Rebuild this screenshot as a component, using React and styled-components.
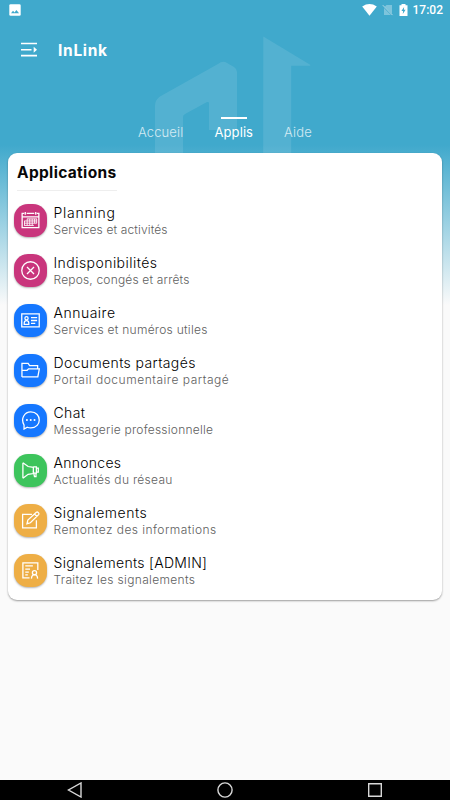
import React from "react";
import styled, { createGlobalStyle } from "styled-components";

const apps = [
	{ title: "Planning", text: "Services et activités", icon: "calendar", color: "#c9357c", ts: 0.75, ss: 0.13 },
	{ title: "Indisponibilités", text: "Repos, congés et arrêts", icon: "cross", color: "#c9357c", ts: 0.45, ss: 0.18 },
	{ title: "Annuaire", text: "Services et numéros utiles", icon: "card", color: "#1577ff", ts: 0.5, ss: 0.26 },
	{ title: "Documents partagés", text: "Portail documentaire partagé", icon: "folder", color: "#1577ff", ts: 0.38, ss: 0.52 },
	{ title: "Chat", text: "Messagerie professionnelle", icon: "chat", color: "#1577ff", ts: 0.4, ss: 0.23 },
	{ title: "Annonces", text: "Actualités du réseau", icon: "horn", color: "#3dc45c", ts: 0.28, ss: 0.3 },
	{ title: "Signalements", text: "Remontez des informations", icon: "edit", color: "#eeae45", ts: 0.5, ss: 0.45 },
	{ title: "Signalements [ADMIN]", text: "Traitez les signalements", icon: "admin", color: "#eeae45", ts: 0.3, ss: 0.33 },
];

const icons = {
	calendar: (
		<>
			<path d="M3.500 2.500H1.200v15h17.600v-15h-2.300M6 2.500h8M1.200 6.200h17.600" />
			<path d="M4.500 1v3M15.500 1v3" />
			<path strokeWidth=".9" d="M6.300 8.300h10.400M3.300 10.500h13.400M3.300 12.800h13.400M3.300 15.200h10.200M3.700 10.500v4.700M6.500 8.300v6.900M9.200 8.300v6.900M11.800 8.300v6.900M14.300 8.300v4.500M16.500 8.300v4.500" />
		</>
	),
	cross: (
		<>
			<circle cx="10" cy="10" r="9.200" />
			<path d="M6.300 6.300l7.400 7.400M13.700 6.300l-7.400 7.400" />
		</>
	),
	card: (
		<>
			<path d="M.8 3h18.400v13.700H.8z" />
			<circle cx="5.800" cy="7.700" r="1.700" />
			<path d="M3.400 14.100v-1.600c0-3.200 4.800-3.200 4.800 0v1.600zM10.500 7H17M10.500 10H17M10.500 13h4.500" />
		</>
	),
	folder: (
		<path d="M1 16.800V2.500h6.500l1.600 2.300h8.400v3.400M1 16.800h16.700l1.600-8.600H8L6.400 9.800H1" />
	),
	chat: (
		<>
			<path d="M3.200 19v-4.300C-.8 7.800 4 1 10.300 1c11.900 0 11.900 16.800 0 16.800-1.400 0-2.600-.2-3.700-.7z" />
			<path strokeWidth="2" strokeLinecap="round" d="M6.200 9.400h.1M10.200 9.400h.1M14.200 9.400h.1" />
		</>
	),
	horn: (
		<>
			<path d="M2 1.800v16.400M2 1.800l5.500 4 5.500.8v6.600l-5.500.8L2 18.200" />
			<path d="M13 6.200h3.200v6.600H13M16.200 7.400h2v4.200h-2M13 11l1.200 5.500h1.600v-3.700" />
		</>
	),
	edit: (
		<>
			<path d="M11.500 3.500H1.700v14.300h14.500V9.800" />
			<path d="M6.300 13.400l.9-3.800 9-8.200c1.300-1 3.400 1.100 2.300 2.400l-8.600 8.600zM14.200 3.200l2.600 2.600" />
		</>
	),
	admin: (
		<>
			<path d="M9 17.800H2V2h15.700v7.500M4.500 5.200h8M4.500 8.500h5M4.500 11.600h3.700M4.500 14.700h2.700" />
			<circle cx="14.200" cy="12.300" r="2.200" />
			<path d="M11 18.600c.4-5.600 6.100-5.600 6.500 0" />
		</>
	),
};

const App = () => {
	return (
		<Phone>
			<GlobalStyle />
			<Logo viewBox="0 0 450 153">
				<path d="M155 153V106q0-6 5-9.500L218 64q5-4 9-1l7 4q3 2 3 5v58h-28v-27q0-1.500-2-1l-22 12q-2 1-2 3v36z" />
				<path d="M263.300 36.500L310.500 65l-.5.700h-18.800V153h-28z" />
			</Logo>
			<StatusBar>
				<Picture viewBox="0 0 12 12">
					<rect x=".3" y=".3" width="11.400" height="11.400" rx="1.300" fill="#fff" />
					<path d="M2 9.300l2-2.500 1.600 1.600L7.300 6l2.800 3.300z" fill="#40a9cc" />
				</Picture>
				<StatusIcons>
					<svg width="15" height="12" viewBox="0 0 15 12">
						<path d="M.2 2.400Q7.500-2.200 14.800 2.400L7.500 11.800z" fill="#fff" />
					</svg>
					<svg width="12" height="12" viewBox="0 0 12 12">
						<path d="M4.500 1H10v8.700L2.800 2.700zM2 4l7 7H2z" fill="#fff" opacity=".32" />
						<path d="M.8 1.200l9.700 9.900" stroke="#b5dae6" strokeWidth="1" />
					</svg>
					<svg width="9" height="12" viewBox="0 0 9 12">
						<path d="M.5 1.300h2V.1h4v1.200h2v10.600h-8z" fill="#fff" />
						<path d="M5.100 2.900L2.400 7h1.700L3.800 10l2.800-4.200H4.900z" fill="#40a9cc" />
					</svg>
					<Clock>17:02</Clock>
				</StatusIcons>
			</StatusBar>
			<AppBar>
				<svg width="17" height="16" viewBox="0 0 17 16" fill="none" stroke="#fff" strokeWidth="1.600">
					<path d="M0 1.500h16M0 7.700h10.500M0 13.600h16" />
					<path d="M12.700 4.700l3.300 3-3.300 3z" fill="#fff" stroke="none" />
				</svg>
				<Brand>InLink</Brand>
			</AppBar>
			<Tabs>
				<Tab $spacing="0.15px">Accueil</Tab>
				<Tab $active $spacing="0.1px">Applis</Tab>
				<Tab $spacing="0.2px">Aide</Tab>
			</Tabs>
			<Card>
				<Heading>Applications</Heading>
				{apps.map((app) => (
					<Row key={app.title}>
						<Tile $color={app.color}>
							<Glyph viewBox="0 0 20 20">{icons[app.icon]}</Glyph>
						</Tile>
						<Labels>
							<Title $spacing={app.ts}>{app.title}</Title>
							<Text $spacing={app.ss}>{app.text}</Text>
						</Labels>
					</Row>
				))}
			</Card>
			<NavBar>
				<svg width="16" height="16" viewBox="0 0 16 16">
					<path d="M14 1v14L1.500 8z" />
				</svg>
				<svg width="16" height="16" viewBox="0 0 16 16">
					<circle cx="8" cy="8" r="7.100" />
				</svg>
				<svg width="16" height="16" viewBox="0 0 16 16">
					<path d="M1.700 1.700h12.600v12.600H1.700z" />
				</svg>
			</NavBar>
		</Phone>
	);
};

export default App;

const GlobalStyle = createGlobalStyle`
	* {
		box-sizing: border-box;
	}
	body {
		margin: 0;
		font-family: Inter, "Noto Sans", sans-serif;
	}
	svg {
		display: block;
		flex-shrink: 0;
	}
`;

const Phone = styled.div`
	position: relative;
	display: flex;
	flex-direction: column;
	width: 450px;
	height: 800px;
	overflow: hidden;
	background: linear-gradient(#40a9cc 145px, #fafafa 305px);
`;

/* faded logo behind the header */
const Logo = styled.svg`
	position: absolute;
	top: 0;
	left: 0;
	width: 450px;
	height: 153px;
	fill: rgba(255, 255, 255, 0.1);
`;

const StatusBar = styled.div`
	position: relative;
	display: flex;
	justify-content: space-between;
	align-items: center;
	height: 20px;
	padding: 0 7px 0 9px;
`;

const Picture = styled.svg`
	width: 12px;
	height: 12px;
`;

const StatusIcons = styled.div`
	display: flex;
	align-items: center;
	gap: 5px;
`;

const Clock = styled.span`
	font: 500 12px/20px Roboto, sans-serif;
	color: #fff;
`;

const AppBar = styled.div`
	position: relative;
	display: flex;
	align-items: center;
	gap: 20px;
	height: 59px;
	padding-left: 21px;
`;

const Brand = styled.div`
	padding-top: 1px;
	color: #fff;
	font-size: 15.500px;
	font-weight: 700;
	letter-spacing: 0.700px;
`;

const Tabs = styled.div`
	position: relative;
	display: flex;
	justify-content: center;
	gap: 31px;
	height: 74px;
	padding-top: 38px;
`;

const Tab = styled.div`
	position: relative;
	height: 30px;
	color: #fff;
	font-size: 13px;
	font-weight: ${(p) => (p.$active ? 400 : 300)};
	line-height: 30px;
	letter-spacing: ${(p) => p.$spacing};
	opacity: ${(p) => (p.$active ? 1 : 0.75)};

	&::before {
		content: "";
		display: ${(p) => (p.$active ? "block" : "none")};
		position: absolute;
		top: 0;
		left: 50%;
		width: 26px;
		height: 2px;
		margin-left: -13px;
		background: #fff;
	}
`;

const Card = styled.div`
	position: relative;
	height: 447px;
	margin: 0 8px;
	padding: 0 6px;
	border-radius: 9px;
	background: #fff;
	box-shadow: 0 1px 2px rgba(0, 0, 0, 0.38);
`;

const Heading = styled.div`
	width: 100px;
	height: 38px;
	margin-left: 3px;
	border-bottom: 1px solid #eee;
	color: #080808;
	font-size: 15.500px;
	font-weight: 700;
	line-height: 39px;
	letter-spacing: 0.330px;
	white-space: nowrap;
`;

const Row = styled.div`
	display: flex;
	gap: 6.500px;
	height: 50px;
	padding-top: 13px;
`;

const Tile = styled.div`
	display: flex;
	justify-content: center;
	align-items: center;
	width: 33px;
	height: 33px;
	border-radius: 14px;
	background: ${(p) => p.$color};
	box-shadow: 0 1px 2px rgba(0, 0, 0, 0.3);
`;

const Glyph = styled.svg`
	width: 19px;
	height: 19px;
	fill: none;
	stroke: #fff;
	stroke-width: 1.350;
`;

const Labels = styled.div`
	white-space: nowrap;
`;

const Title = styled.div`
	color: #000;
	font-size: 14px;
	font-weight: 300;
	line-height: 17px;
	letter-spacing: ${(p) => p.$spacing}px;
`;

const Text = styled.div`
	color: #606060;
	font-size: 12px;
	font-weight: 300;
	line-height: 17px;
	letter-spacing: ${(p) => p.$spacing}px;
`;

const NavBar = styled.div`
	display: flex;
	justify-content: space-around;
	align-items: center;
	height: 20px;
	margin-top: auto;
	background: #000;

	svg {
		fill: none;
		stroke: #d8d8d8;
		stroke-width: 1.400;
	}
`;
